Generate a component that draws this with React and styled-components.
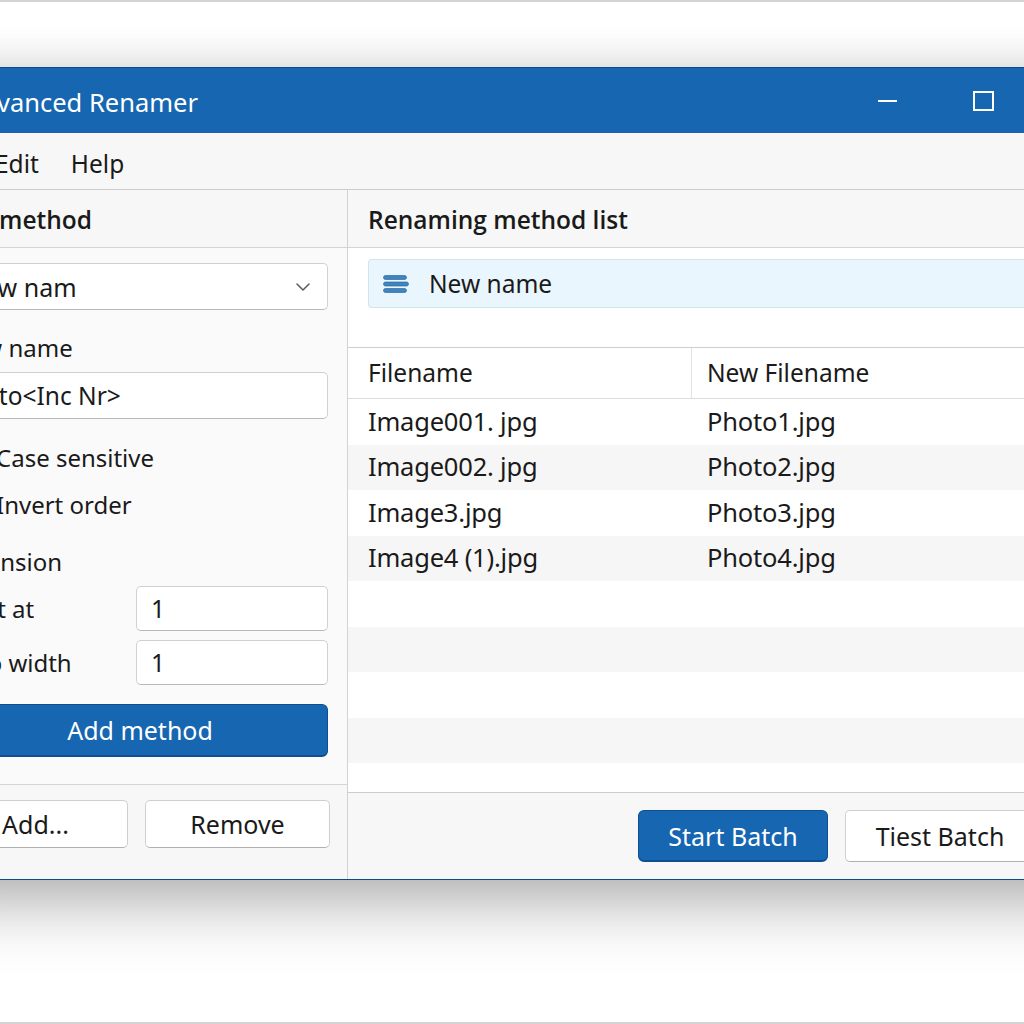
import React from "react";
import styled, { createGlobalStyle } from "styled-components";
import { ChevronDown } from "lucide-react";

const GlobalStyle = createGlobalStyle`
  html, body {
    margin: 0;
    padding: 0;
    background: #ffffff;
  }
  * {
    box-sizing: border-box;
  }
`;

const Page = styled.div`
  width: 1024px;
  height: 1024px;
  overflow: hidden;
  background: #ffffff;
  border-top: 2px solid #d4d4d4;
  border-bottom: 2px solid #d4d4d4;
  padding-top: 65px;
  font-family: "Noto Sans", "Open Sans", sans-serif;
  color: #1a1a1a;
`;

const Window = styled.div`
  width: 1195px;
  height: 813px;
  margin-left: -68px;
  display: flex;
  flex-direction: column;
  background: #f7f7f7;
  border-top: 1px solid #0d4a8c;
  border-bottom: 1px solid #0d4a8c;
  box-shadow: 0 26px 60px rgba(0, 0, 0, 0.28), 0 -4px 40px rgba(0, 0, 0, 0.09);
`;

const TitleBar = styled.div`
  height: 65px;
  flex-shrink: 0;
  display: flex;
  align-items: center;
  background: #1666b1;
  color: #ffffff;
  padding-left: 33px;
`;

const Title = styled.div`
  flex: 1;
  font-size: 25.5px;
  padding-top: 2px;
`;

const WinButton = styled.div`
  width: 96px;
  height: 100%;
  display: flex;
  align-items: center;
  justify-content: center;
`;

const MinGlyph = styled.div`
  width: 19px;
  height: 2px;
  background: #ffffff;
`;

const MaxGlyph = styled.div`
  width: 21px;
  height: 20px;
  border: 2px solid #ffffff;
`;

const MenuBar = styled.div`
  height: 57px;
  flex-shrink: 0;
  display: flex;
  align-items: center;
  gap: 32px;
  padding-left: 63px;
  padding-top: 4px;
  background: #f7f7f7;
  border-bottom: 1px solid #cdcdcd;
  font-size: 24.5px;
`;

const Main = styled.div`
  flex: 1;
  display: flex;
  min-height: 0;
`;

const LeftPanel = styled.div`
  width: 416px;
  flex-shrink: 0;
  display: flex;
  flex-direction: column;
  border-right: 1px solid #d2d2d2;
  background: #fafafa;
`;

const RightPanel = styled.div`
  flex: 1;
  display: flex;
  flex-direction: column;
  background: #ffffff;
  min-width: 0;
`;

const PanelHeader = styled.div`
  height: 58px;
  flex-shrink: 0;
  display: flex;
  align-items: center;
  padding-left: ${(p) => p.$pl || 20}px;
  padding-top: 2px;
  background: #f7f7f7;
  border-bottom: 1px solid #d4d4d4;
  font-family: "Open Sans", "Noto Sans", sans-serif;
  font-size: 24.5px;
  font-weight: 600;
`;

const LeftBody = styled.div`
  flex: 1;
  padding: 15px 19px 0 20px;
  display: flex;
  flex-direction: column;
`;

const Select = styled.div`
  height: 47px;
  display: flex;
  align-items: center;
  justify-content: space-between;
  padding: 0 12px 0 12px;
  background: #ffffff;
  border: 1px solid #d0d0d0;
  border-bottom-color: #b8b8b8;
  border-radius: 5px;
  font-size: 25px;
  color: #5a5a5a;

  span {
    color: #1a1a1a;
  }
`;

const FieldLabel = styled.div`
  height: 30px;
  margin-top: ${(p) => p.$mt || 0}px;
  display: flex;
  align-items: center;
  font-size: 24px;
`;

const TextInput = styled.div`
  height: ${(p) => p.$h || 47}px;
  margin-top: ${(p) => p.$mt || 0}px;
  display: flex;
  align-items: center;
  padding: 0 14px 0 ${(p) => p.$pl ?? 14}px;
  background: #ffffff;
  border: 1px solid #d0d0d0;
  border-bottom-color: #b8b8b8;
  border-radius: 5px;
  font-size: 24.5px;
`;

const CheckRow = styled.div`
  height: 36px;
  margin-top: ${(p) => p.$mt || 0}px;
  display: flex;
  align-items: center;
  gap: 22px;
  font-size: 24px;
`;

const CheckBox = styled.div`
  width: 22px;
  height: 22px;
  flex-shrink: 0;
  border: 1px solid #8a8a8a;
  border-radius: 4px;
  background: #ffffff;
`;

const FormRow = styled.div`
  margin-top: ${(p) => p.$mt || 0}px;
  display: grid;
  grid-template-columns: 184px 1fr;
  align-items: center;
  font-size: 24px;
`;

const PrimaryButton = styled.div`
  height: ${(p) => p.$h || 53}px;
  width: ${(p) => (p.$w ? `${p.$w}px` : "auto")};
  margin-top: ${(p) => p.$mt || 0}px;
  display: flex;
  align-items: center;
  justify-content: center;
  background: #1666b1;
  border: 1px solid #0f4f91;
  border-bottom-width: 2px;
  border-radius: 6px;
  color: #ffffff;
  font-size: 25px;
`;

const SecondaryButton = styled.div`
  height: ${(p) => p.$h || 48}px;
  width: ${(p) => (p.$w ? `${p.$w}px` : "auto")};
  display: flex;
  align-items: center;
  justify-content: center;
  background: #ffffff;
  border: 1px solid #cfcfcf;
  border-bottom-color: #b0b0b0;
  border-radius: 5px;
  font-size: 25px;
`;

const LeftFooter = styled.div`
  height: 95px;
  flex-shrink: 0;
  padding: 15px 17px 0 0;
  display: grid;
  grid-template-columns: 185px 185px;
  justify-content: end;
  align-content: start;
  gap: 17px;
  border-top: 1px solid #d4d4d4;
  background: #f7f7f7;
`;

const MethodList = styled.div`
  height: 100px;
  flex-shrink: 0;
  padding: 11px 0 0 20px;
  border-bottom: 1px solid #cfcfcf;
`;

const MethodItem = styled.div`
  height: 49px;
  display: flex;
  align-items: center;
  gap: 20px;
  padding-left: 14px;
  background: #eaf6fd;
  border: 1px solid #d3e4ef;
  border-right: none;
  border-radius: 4px 0 0 4px;
  font-size: 24.5px;
`;

const TableHead = styled.div`
  height: 51px;
  flex-shrink: 0;
  display: grid;
  grid-template-columns: 344px 1fr;
  border-bottom: 1px solid #dcdcdc;
  font-size: 24.5px;
`;

const HeadCell = styled.div`
  display: flex;
  align-items: center;
  padding-left: ${(p) => p.$pl}px;
  padding-bottom: 2px;
  border-right: ${(p) => (p.$divider ? "1px solid #e2e2e2" : "none")};
`;

const TableBody = styled.div`
  flex: 1;
  overflow: hidden;
  min-height: 0;
`;

const Row = styled.div`
  height: 45.5px;
  display: grid;
  grid-template-columns: 344px 1fr;
  align-items: center;
  background: ${(p) => (p.$alt ? "#f6f6f6" : "#ffffff")};
  font-size: 25.5px;
  letter-spacing: -0.2px;
`;

const Cell = styled.div`
  padding-left: ${(p) => p.$pl}px;
  padding-bottom: 2px;
  white-space: nowrap;
`;

const RightFooter = styled.div`
  height: 87px;
  flex-shrink: 0;
  display: flex;
  justify-content: flex-end;
  align-items: flex-start;
  gap: 17px;
  padding: 17px 92px 0 0;
  border-top: 1px solid #cccccc;
  background: #f7f7f7;
`;

const MethodIcon = () => (
  <svg width="26" height="18" viewBox="0 0 26 18">
    <rect x="0.5" y="0.5" width="23" height="4" rx="2" fill="#3f84bc" stroke="#2c6aa0" strokeWidth="0.7" />
    <rect x="0.5" y="7" width="25" height="4" rx="2" fill="#3f84bc" stroke="#2c6aa0" strokeWidth="0.7" />
    <rect x="0.5" y="13.5" width="23" height="4" rx="2" fill="#3f84bc" stroke="#2c6aa0" strokeWidth="0.7" />
  </svg>
);

const files = [
  ["Image001. jpg", "Photo1.jpg"],
  ["Image002. jpg", "Photo2.jpg"],
  ["Image3.jpg", "Photo3.jpg"],
  ["Image4 (1).jpg", "Photo4.jpg"],
  ["", ""],
  ["", ""],
  ["", ""],
  ["", ""],
  ["", ""],
];

export default function App() {
  return (
    <>
      <GlobalStyle />
      <Page>
        <Window>
          <TitleBar>
            <Title>Advanced Renamer</Title>
            <WinButton>
              <MinGlyph />
            </WinButton>
            <WinButton>
              <MaxGlyph />
            </WinButton>
            <WinButton />
          </TitleBar>

          <MenuBar>
            <span>Edit</span>
            <span>Help</span>
          </MenuBar>

          <Main>
            <LeftPanel>
              <PanelHeader $pl={14}>Add method</PanelHeader>
              <LeftBody>
                <Select>
                  <span>New nam</span>
                  <ChevronDown size={24} strokeWidth={1.5} />
                </Select>
                <FieldLabel $mt={22}>New name</FieldLabel>
                <TextInput $mt={10} $pl={1}>
                  Photo&lt;Inc Nr&gt;
                </TextInput>
                <CheckRow $mt={20}>
                  <CheckBox />
                  Case sensitive
                </CheckRow>
                <CheckRow $mt={11}>
                  <CheckBox />
                  Invert order
                </CheckRow>
                <FieldLabel $mt={24}>Extension</FieldLabel>
                <FormRow $mt={10}>
                  <span>Start at</span>
                  <TextInput $h={45}>1</TextInput>
                </FormRow>
                <FormRow $mt={9}>
                  <span>Step width</span>
                  <TextInput $h={45}>1</TextInput>
                </FormRow>
                <PrimaryButton $mt={19}>Add method</PrimaryButton>
              </LeftBody>
              <LeftFooter>
                <SecondaryButton>Add...</SecondaryButton>
                <SecondaryButton>Remove</SecondaryButton>
              </LeftFooter>
            </LeftPanel>

            <RightPanel>
              <PanelHeader>Renaming method list</PanelHeader>
              <MethodList>
                <MethodItem>
                  <MethodIcon />
                  New name
                </MethodItem>
              </MethodList>
              <TableHead>
                <HeadCell $pl={20} $divider>
                  Filename
                </HeadCell>
                <HeadCell $pl={15}>New Filename</HeadCell>
              </TableHead>
              <TableBody>
                {files.map(([from, to], i) => (
                  <Row key={i} $alt={i % 2 === 1}>
                    <Cell $pl={20}>{from}</Cell>
                    <Cell $pl={15}>{to}</Cell>
                  </Row>
                ))}
              </TableBody>
              <RightFooter>
                <PrimaryButton $h={52} $w={190}>
                  Start Batch
                </PrimaryButton>
                <SecondaryButton $h={52} $w={190}>
                  Tiest Batch
                </SecondaryButton>
              </RightFooter>
            </RightPanel>
          </Main>
        </Window>
      </Page>
    </>
  );
}
